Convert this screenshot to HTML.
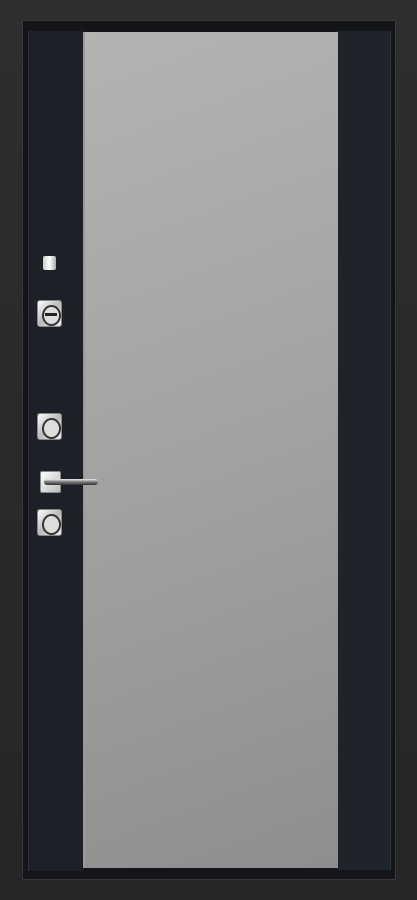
<!DOCTYPE html>
<html><head><style>
body{margin:0;width:417px;height:900px;background:#2b2b2b;position:relative;overflow:hidden}
div{position:absolute;box-sizing:border-box}
.rose{width:25px;height:27px;border-radius:3px;background:linear-gradient(135deg,#fff,#bbb 50%,#eee);border:1px solid #888}
.rose i{position:absolute;left:4px;top:4px;width:15px;height:17px;border-radius:50%;border:2px solid #333;background:#ddd}
</style></head><body>
<div style="left:0;top:0;width:417px;height:900px;background:linear-gradient(#2e2e2e,#262626)"></div>
<div style="left:22px;top:20px;width:374px;height:860px;background:#141518;border:1px solid #383838"></div>
<div style="left:28px;top:31px;width:56px;height:840px;background:#1d2027;border-left:1px solid #2c3038"></div>
<div style="left:337px;top:31px;width:54px;height:839px;background:#1f232a;border-right:1px solid #2c3038"></div>
<div style="left:83px;top:32px;width:255px;height:836px;background:linear-gradient(160deg,#b3b3b3,#a2a2a2 50%,#8e8e8e);border-left:2px solid #9a9a9a"></div>
<div style="left:43px;top:256px;width:13px;height:14px;background:linear-gradient(90deg,#ccc,#fff,#aaa);border-radius:2px"></div>
<div class="rose" style="left:37px;top:300px"><i></i><div style="left:7px;top:12px;width:12px;height:3px;background:#222"></div></div>
<div class="rose" style="left:37px;top:413px"><i></i></div>
<div style="left:40px;top:471px;width:21px;height:22px;border-radius:2px;background:linear-gradient(135deg,#fff,#bbb);border:1px solid #888"></div>
<div style="left:44px;top:479px;width:54px;height:6px;border-radius:3px;background:linear-gradient(#eee,#777,#333)"></div>
<div class="rose" style="left:37px;top:509px"><i></i></div>
</body></html>
